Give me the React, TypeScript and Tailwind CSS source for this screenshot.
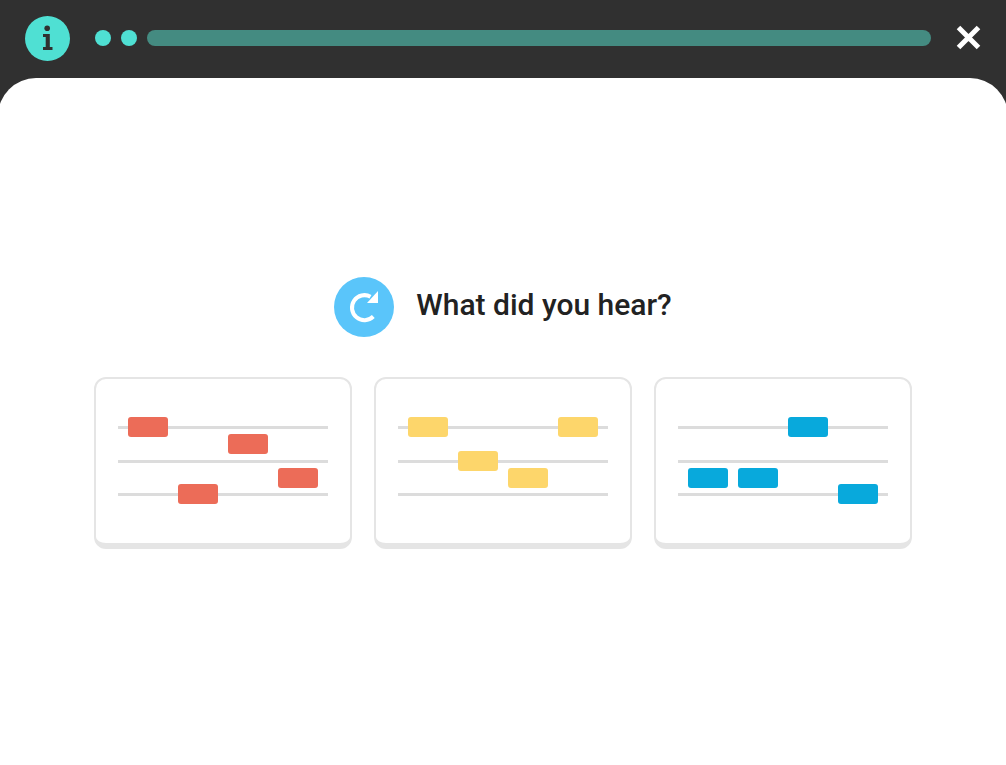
const notes = [
  {
    color: "#ec6c58",
    items: [
      [10, 0],
      [110, 17],
      [160, 51],
      [60, 67],
    ],
  },
  {
    color: "#fdd66b",
    items: [
      [10, 0],
      [160, 0],
      [60, 34],
      [110, 51],
    ],
  },
  {
    color: "#08a9dc",
    items: [
      [110, 0],
      [10, 51],
      [60, 51],
      [160, 67],
    ],
  },
];

const AnswerCard = ({ color, items }: { color: string; items: number[][] }) => {
  return (
    <button className="w-[258px] h-[172px] rounded-[12px] border-2 border-b-[6px] border-[#e5e5e5] bg-white pl-[22px] pt-[38px] flex items-start">
      <svg width="210" height="87" viewBox="0 0 210 87" className="block">
        <rect x="0" y="9" width="210" height="3" fill="#dcdcdc" />
        <rect x="0" y="43" width="210" height="3" fill="#dcdcdc" />
        <rect x="0" y="76" width="210" height="3" fill="#dcdcdc" />
        {items.map(([x, y], ind) => (
          <rect key={ind} x={x} y={y} width="40" height="20" rx="3" fill={color} />
        ))}
      </svg>
    </button>
  );
};

export default function App() {
  return (
    <div className="h-screen overflow-hidden flex flex-col bg-[#303030] font-['Roboto',sans-serif]">
      <header className="h-[78px] shrink-0 flex items-start pt-4 pl-[25px] pr-[25px]">
        <svg width="45" height="45" viewBox="0 0 45 45" className="shrink-0">
          <circle cx="22.5" cy="22.5" r="22.5" fill="#4fe0d3" />
          <circle cx="22.2" cy="12.2" r="2.8" fill="#303030" />
          <path d="M18 18H24.8V31H27.5V34H18V31H20.7V21H18Z" fill="#303030" />
        </svg>
        <div className="flex-1 flex items-center h-4 mt-[14px]">
          <div className="w-4 h-4 rounded-full bg-[#4fe0d3] ml-[25px]" />
          <div className="w-4 h-4 rounded-full bg-[#4fe0d3] ml-[10px]" />
          <div className="flex-1 h-4 rounded-full bg-[#448b81] ml-[10px]" />
        </div>
        <svg width="25" height="25" viewBox="0 0 25 25" className="ml-[25px] mt-[9px] shrink-0">
          <path d="M2.5 2.5L22.5 22.5M22.5 2.5L2.5 22.5" stroke="#ffffff" strokeWidth="5" />
        </svg>
      </header>

      <main className="flex-1 -mx-[2px] bg-white rounded-t-[38px] flex flex-col items-center pt-[199px]">
        <div className="flex items-center gap-[22px] h-[60px]">
          <div className="w-[60px] h-[60px] rounded-full bg-[#5ac5fa] flex items-center justify-center">
            <svg width="60" height="60" viewBox="0 0 60 60">
              <path
                d="M39.3 39.5A12.5 12.5 0 1 1 36.5 19.7"
                fill="none"
                stroke="#ffffff"
                strokeWidth="4"
              />
              <path d="M33 26H44V14Z" fill="#ffffff" />
            </svg>
          </div>
          <h1 className="text-[30px] font-medium text-[#222222] pb-[6px]">What did you hear?</h1>
        </div>

        <div className="flex gap-[22px] mt-10">
          {notes.map((card, ind) => (
            <AnswerCard key={ind} color={card.color} items={card.items} />
          ))}
        </div>
      </main>
    </div>
  );
}
